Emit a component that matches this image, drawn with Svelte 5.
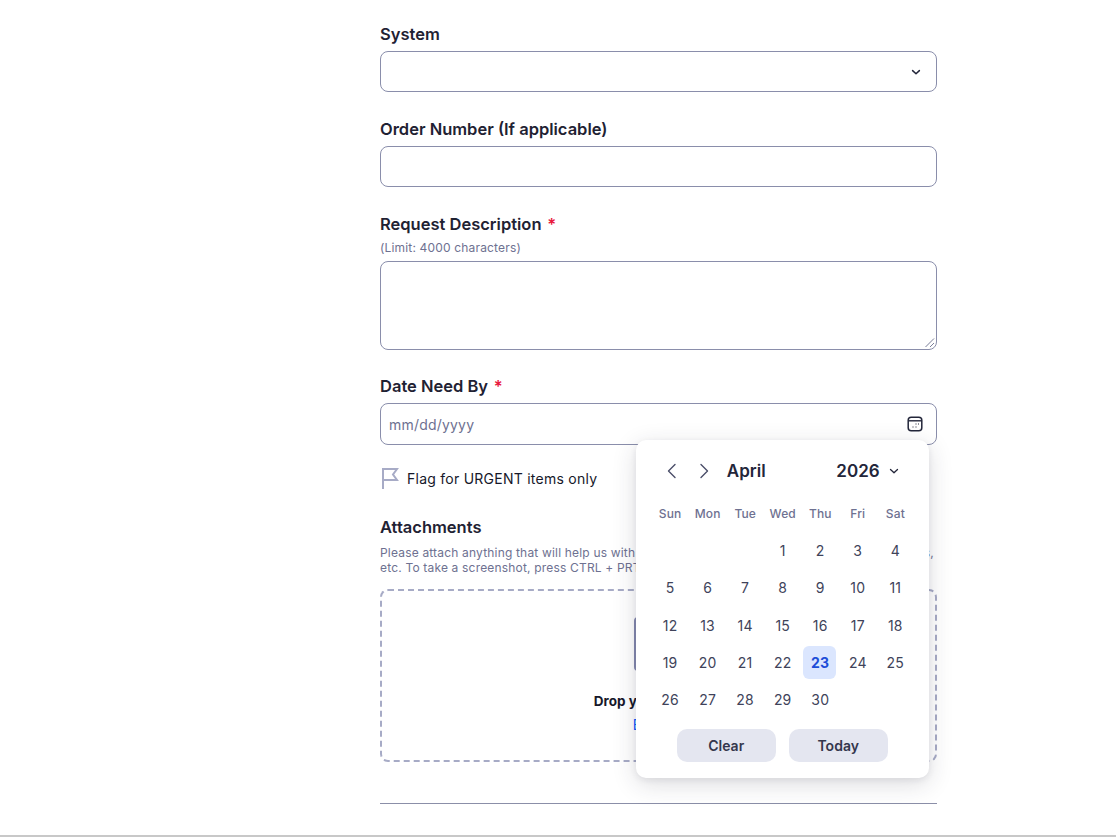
<script>
  const weekdays = ['Sun', 'Mon', 'Tue', 'Wed', 'Thu', 'Fri', 'Sat'];
  const days = [null, null, null];
  for (let d = 1; d <= 30; d++) days.push(d);
</script>

<div class="page">
  <form class="form">
    <div class="field">
      <div class="label">System</div>
      <div class="input">
        <svg class="chev" width="12" height="12" viewBox="0 0 12 12" fill="none" stroke="#23263a" stroke-width="1.5" stroke-linecap="round" stroke-linejoin="round"><path d="M2.600 4.600 6 7.800l3.400-3.200" /></svg>
      </div>
    </div>

    <div class="field">
      <div class="label">Order Number (If applicable)</div>
      <div class="input"></div>
    </div>

    <div class="field req">
      <div class="label">Request Description <span class="star">*</span></div>
      <div class="hint">(Limit: 4000 characters)</div>
      <div class="input area">
        <svg class="grip" width="11" height="11" viewBox="0 0 11 11" fill="none" stroke="#7b7f99" stroke-width="1"><path d="M1.500 10 10 1.500M6 10l4-4" /></svg>
      </div>
    </div>

    <div class="field date">
      <div class="label">Date Need By <span class="star">*</span></div>
      <div class="input dateinput">
        <span class="ph">mm/dd/yyyy</span>
        <svg width="16" height="16" viewBox="0 0 16 16" fill="none"><rect x="1.200" y="1.200" width="13.600" height="13.600" rx="3" stroke="#23263a" stroke-width="1.500" /><path d="M1.500 4.800h13" stroke="#23263a" stroke-width="1.400" /><path d="M8.500 8h1M11 8h1M5.500 11h1M8.500 11h1" stroke="#23263a" stroke-width="1.200" /></svg>
      </div>
    </div>

    <div class="flag">
      <svg width="19" height="22" viewBox="0 0 19 22" fill="none" stroke="#a7abc6" stroke-width="2"><path d="M2 22V2h14l-4 5.500 4 5.500H2" /></svg>
      <span>Flag for URGENT items only</span>
    </div>

    <div class="attach">
      <div class="label">Attachments</div>
      <p class="desc">Please attach anything that will help us with your requests, such as documents or screenshots,<br />etc. To take a screenshot, press CTRL + PRT SCR on your keyboard.</p>
      <div class="drop">
        <div class="dropicon"></div>
        <div class="droptitle">Drop your files here</div>
        <div class="browse">Browse</div>
      </div>
    </div>

    <hr class="rule" />

    <div class="cal">
      <div class="calhead">
        <svg class="arrow" width="18" height="18" viewBox="0 0 18 18" fill="none" stroke="#4a4e69" stroke-width="1.4" stroke-linecap="round" stroke-linejoin="round"><path d="M12 2.500 5.500 9l6.500 6.500" /></svg>
        <svg class="arrow next" width="18" height="18" viewBox="0 0 18 18" fill="none" stroke="#4a4e69" stroke-width="1.4" stroke-linecap="round" stroke-linejoin="round"><path d="M6 2.500 12.500 9 6 15.500" /></svg>
        <span class="month">April</span>
        <span class="year">2026</span>
        <svg class="yearchev" width="12" height="12" viewBox="0 0 12 12" fill="none" stroke="#23263a" stroke-width="1.3" stroke-linecap="round" stroke-linejoin="round"><path d="M2.500 4.500 6 7.800l3.500-3.300" /></svg>
      </div>
      <div class="grid wk">
        {#each weekdays as w}
          <div>{w}</div>
        {/each}
      </div>
      <div class="grid days">
        {#each days as d}
          <div class="day" class:today={d === 23}>{d ?? ''}</div>
        {/each}
      </div>
      <div class="btns">
        <button type="button">Clear</button>
        <button type="button">Today</button>
      </div>
    </div>
  </form>
  <div class="bottomline"></div>
</div>

<style>
  :global(body) {
    margin: 0;
    background: #fff;
  }
  .page {
    height: 837px;
    position: relative;
    overflow: hidden;
    font-family: Inter, "Liberation Sans", sans-serif;
    color: #23263a;
  }
  .form {
    position: relative;
    width: 557px;
    margin-left: 380px;
    padding-top: 24px;
  }
  .field {
    margin-bottom: 27px;
  }
  .req {
    margin-bottom: 26px;
  }
  .label {
    font-size: 16.5px;
    font-weight: 600;
    line-height: 20px;
    color: #1f2233;
    margin-bottom: 7px;
  }
  .star {
    color: #e8173c;
    margin-left: 1.5px;
  }
  .hint {
    font-size: 12px;
    letter-spacing: 0.17px;
    line-height: 16px;
    color: #6e7191;
    margin-top: -1px;
    margin-bottom: 5px;
  }
  .input {
    box-sizing: border-box;
    height: 41px;
    border: 1px solid #8a8eab;
    border-radius: 8px;
    display: flex;
    align-items: center;
    justify-content: flex-end;
    padding: 0 14px 0 8px;
    background: #fff;
  }
  .area {
    height: 89px;
    position: relative;
  }
  .grip {
    position: absolute;
    right: 1px;
    bottom: 1px;
  }
  .date {
    margin-bottom: 0;
  }
  .dateinput {
    height: 42px;
    justify-content: space-between;
    padding-right: 13px;
  }
  .ph {
    font-size: 14px;
    letter-spacing: 0.2px;
    color: #6e7191;
  }
  .flag {
    display: flex;
    align-items: center;
    gap: 7px;
    margin: 22px 0 0 1px;
    height: 22px;
    font-size: 14px;
    font-weight: 400;
    color: #16182a;
    letter-spacing: 0.25px;
  }
  .attach {
    margin-top: 28px;
  }
  .attach .label {
    margin-bottom: 8px;
  }
  .desc {
    margin: 0 0 14px;
    font-size: 12px;
    letter-spacing: 0.18px;
    line-height: 15px;
    color: #6e7191;
    white-space: nowrap;
  }
  .drop {
    box-sizing: border-box;
    height: 173px;
    border: 2px dashed #a7abc6;
    border-radius: 8px;
    display: flex;
    flex-direction: column;
    align-items: center;
    padding-top: 26px;
  }
  .dropicon {
    box-sizing: border-box;
    width: 49px;
    height: 54px;
    border: 2px solid #8589ae;
    border-radius: 4px;
  }
  .droptitle {
    margin-top: 21px;
    font-size: 13.5px;
    font-weight: 700;
    line-height: 18px;
    color: #16182a;
  }
  .browse {
    margin-top: 6px;
    font-size: 14px;
    letter-spacing: 0.4px;
    line-height: 18px;
    color: #0b5cff;
  }
  .rule {
    margin: 41px 0 0;
    border: 0;
    border-top: 1px solid #8b8fa8;
  }
  .bottomline {
    position: absolute;
    left: 0;
    right: 0;
    bottom: 0;
    height: 2px;
    background: #c8c8c8;
  }
  .cal {
    position: absolute;
    left: 256px;
    top: 440px;
    box-sizing: border-box;
    width: 293px;
    height: 338px;
    padding: 0 15.4px 0 14.8px;
    background: #fff;
    border-radius: 10px;
    box-shadow: 0 6px 24px rgba(35, 38, 58, 0.16), 0 2px 6px rgba(35, 38, 58, 0.08);
  }
  .calhead {
    display: flex;
    align-items: center;
    height: 62px;
    padding-left: 12px;
    box-sizing: border-box;
  }
  .arrow.next {
    margin-left: 14px;
  }
  .month,
  .year {
    font-size: 17px;
    font-weight: 600;
    color: #23263a;
  }
  .month {
    margin-left: 14px;
  }
  .year {
    margin-left: auto;
  }
  .yearchev {
    margin: 0 14px 0 8px;
  }
  .grid {
    display: grid;
    grid-template-columns: repeat(7, 1fr);
  }
  .wk {
    height: 23px;
    align-items: center;
    text-align: center;
    font-size: 12px;
    font-weight: 500;
    letter-spacing: 0.1px;
    color: #6e7191;
  }
  .wk div {
    padding-left: 1px;
  }
  .days {
    margin-top: 7px;
    grid-auto-rows: 37.25px;
  }
  .day {
    box-sizing: border-box;
    padding-left: 1px;
    display: flex;
    align-items: center;
    justify-content: center;
    font-size: 14px;
    letter-spacing: 0.2px;
    color: #40435a;
    width: 33px;
    height: 33px;
    justify-self: center;
    align-self: center;
    border-radius: 6px;
  }
  .today {
    background: #dbe6fe;
    color: #1d4ed8;
    font-weight: 700;
  }
  .btns {
    display: flex;
    justify-content: center;
    gap: 13px;
    margin-top: 11px;
  }
  button {
    width: 99px;
    height: 33px;
    border: 0;
    border-radius: 10px;
    background: #e4e6f0;
    font-family: inherit;
    font-size: 14px;
    font-weight: 600;
    color: #34374d;
    padding: 0;
  }
</style>
